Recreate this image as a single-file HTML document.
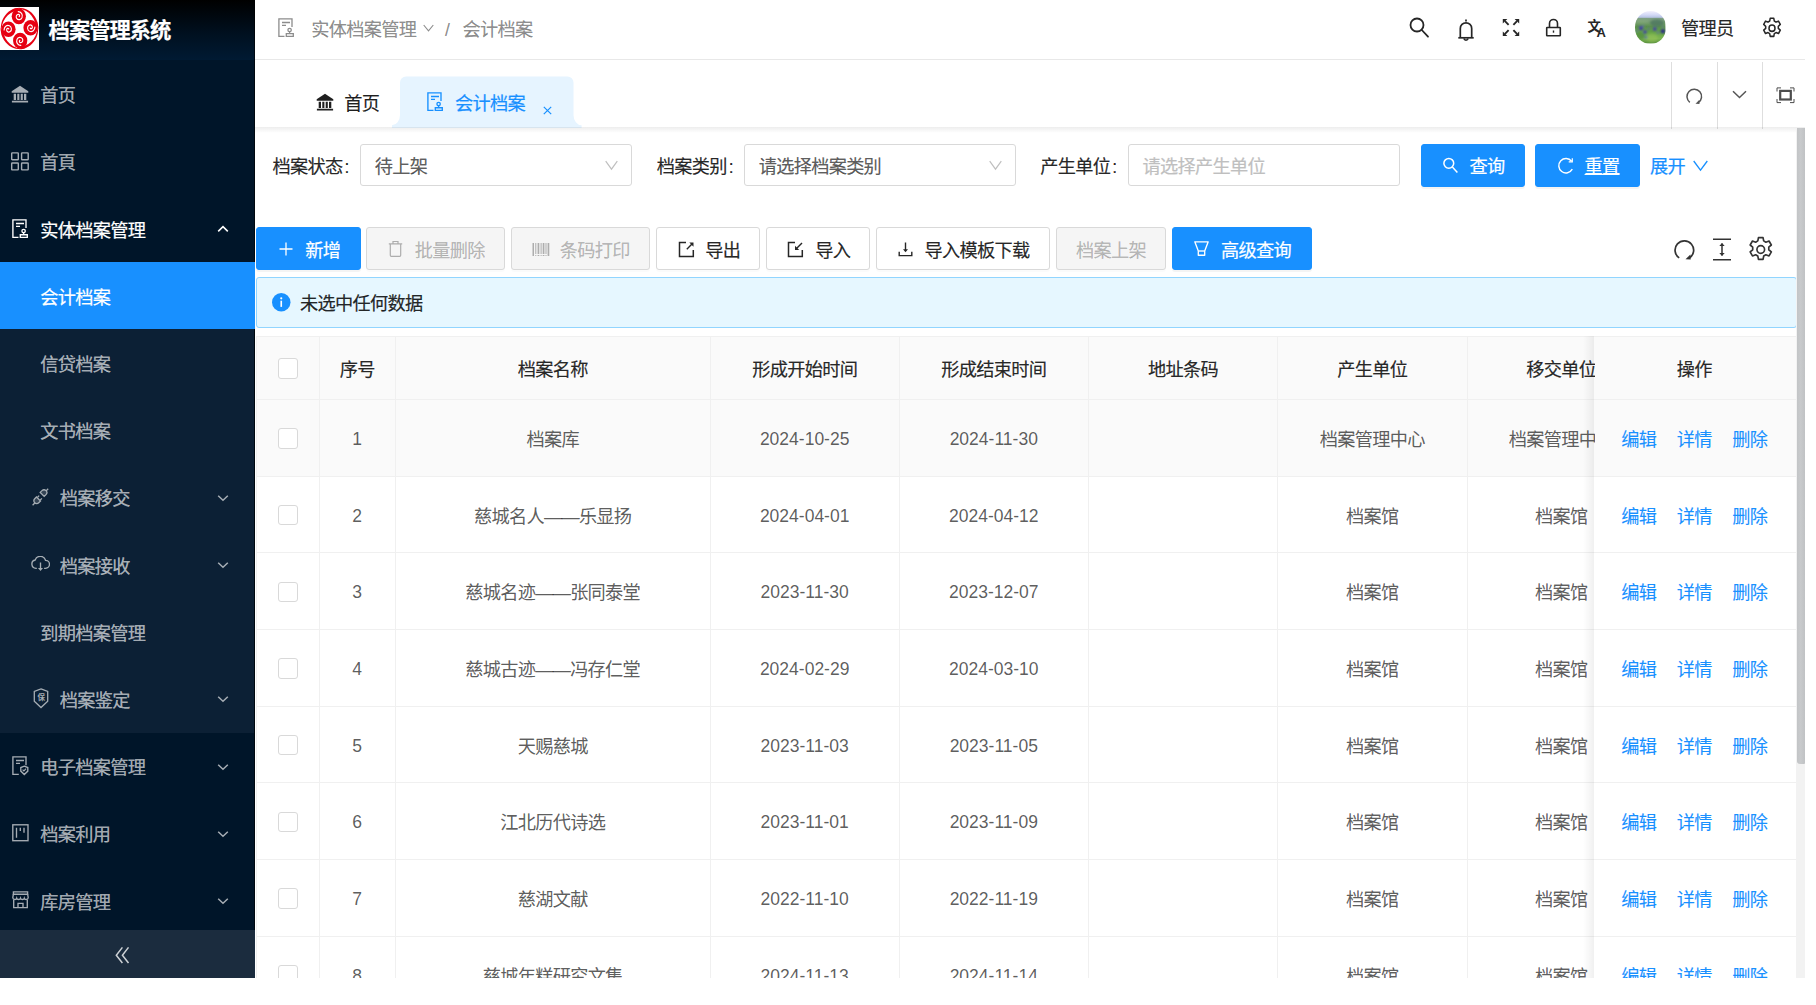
<!DOCTYPE html>
<html lang="zh-CN">
<head>
<meta charset="utf-8">
<title>档案管理系统</title>
<style>
*{box-sizing:border-box;margin:0;padding:0}
html,body{width:1816px;height:1005px;background:#fff;overflow:hidden}
body{font-family:"Liberation Sans","Noto Sans CJK SC",sans-serif;font-size:18.2px;letter-spacing:-0.7px;color:rgba(0,0,0,.85);-webkit-text-stroke:0.22px currentColor}
#app{position:relative;width:1805px;height:978px;overflow:hidden;background:#fff}
svg{display:block}
.abs{position:absolute}
/* sidebar */
#side{position:absolute;left:0;top:0;width:255px;height:978px;background:#001529;z-index:5;overflow:hidden}
#logo{position:absolute;left:0;top:0;width:255px;height:60px;background:linear-gradient(180deg,#000 0%,#00101f 55%,#001a33 100%)}
#logo .img{position:absolute;left:0;top:7px;width:39px;height:43px;background:#fff}
#logo .tt{position:absolute;left:48.6px;top:1.2px;line-height:60px;font-size:21.3px;letter-spacing:-1px;font-weight:700;color:#fff;white-space:nowrap}
.mi{position:absolute;left:0;width:255px;height:67.2px;line-height:67.2px;color:rgba(255,255,255,.65);white-space:nowrap}
.mi .ic{position:absolute;left:11px;top:24.6px;width:18px;height:18px}
.mi .tx{position:absolute;left:40.2px;top:2.6px}
.mi .ar{position:absolute;left:217px;top:28px;width:12px;height:12px}
.mi.sub .ic{left:31px}
.mi.sub .tx{left:59.7px}
.mi.w{color:#fff}
#subbg{position:absolute;left:0;top:262px;width:254px;height:470.5px;background:#0c2035}
#sel{position:absolute;left:0;top:262px;width:255px;height:67.3px;background:#1890ff}
#trig{position:absolute;left:0;top:930px;width:255px;height:48px;background:#1b2c3e}
/* header */
#hdr{position:absolute;left:255px;top:0;width:1550px;height:60px;background:#fff;border-bottom:1px solid #e8e8e8}
.bc{position:absolute;top:1px;line-height:58px;color:rgba(0,0,0,.45);white-space:nowrap}
/* tabs */
#tabs{position:absolute;left:255px;top:60px;width:1550px;height:67.5px;background:#fff}
#tabshadow{position:absolute;left:255px;top:127px;width:1550px;height:6px;background:linear-gradient(180deg,rgba(0,0,0,.07),rgba(0,0,0,0))}
.tb{position:absolute;white-space:nowrap;line-height:25px}
/* form */
.lbl{position:absolute;top:144.3px;height:42px;line-height:46px;white-space:nowrap;color:rgba(0,0,0,.85)}
.inp{position:absolute;top:144.2px;height:42.3px;border:1px solid #d9d9d9;border-radius:3px;background:#fff;line-height:44px;padding-left:14px;white-space:nowrap;color:rgba(0,0,0,.65)}
.btn{position:absolute;height:42.4px;line-height:40px;border:1px solid #d9d9d9;border-radius:3px;background:#fff;white-space:nowrap;color:rgba(0,0,0,.85);box-shadow:0 2px 0 rgba(0,0,0,.015)}
.btn.p{background:#1890ff;border-color:#1890ff;color:#fff;box-shadow:0 2px 0 rgba(0,0,0,.045)}
.btn.d{background:#f5f5f5;color:rgba(0,0,0,.27)}
.btn .t{position:absolute;top:2.4px}
.btn .i{position:absolute}
/* alert */
#alert{position:absolute;left:256px;top:277px;width:1540.5px;height:50.5px;background:#e6f7ff;border:1px solid #91d5ff;border-radius:3px}
/* table */
#tbl{position:absolute;left:256px;top:335.5px;width:1539.500px;height:642.500px;overflow:hidden;border-top:1px solid #f0f0f0;border-left:1px solid #f0f0f0}
.row{position:absolute;left:0;width:1541px;border-bottom:1px solid #f0f0f0}
.row.h{top:0;height:63.4px;background:#fafafa;font-weight:400;color:rgba(0,0,0,.85)}
.row.b{height:76.67px;color:rgba(0,0,0,.65);-webkit-text-stroke:0.08px currentColor}
.c{position:absolute;top:0;height:100%;border-right:1px solid #f0f0f0;text-align:center;white-space:nowrap;overflow:hidden;text-indent:-0.7px}
.row.h .c{line-height:67.5px}
.row.b .c{line-height:80.4px}
.row.b .c.n{line-height:79.2px}
.c0{left:0;width:63px}.c1{left:63px;width:76px}.c2{left:139px;width:315px}.c3{left:454px;width:189px}.c4{left:643px;width:189.2px}.c5{left:832.2px;width:189.3px}.c6{left:1021.5px;width:189px}.c7{left:1210.5px;width:189px}
.c8{left:1337.5px;width:203px;background:#fff;border-right:0}
.row.h .c8{padding-right:2.6px}
.row.h .c8,.row.hv .c8,.row.hv{background:#fafafa}
.n{font-size:17.5px;letter-spacing:0;-webkit-text-stroke:0}
.cb{position:absolute;left:21.1px;width:20px;height:20.5px;border:1px solid #d9d9d9;border-radius:3px;background:#fff}
.row.h .cb{top:21.5px}
.row.b .cb{top:28.3px}
.c8 a{position:absolute;top:0;color:#1890ff}
#fixshadow{position:absolute;left:1583px;top:336px;width:11px;height:642px;background:linear-gradient(90deg,rgba(0,0,0,0),rgba(0,0,0,.06))}
/* scrollbar */
#sbt{position:absolute;left:1796px;top:128px;width:9px;height:850px;background:#f2f2f2}
#sbh{position:absolute;left:1797px;top:128px;width:8px;height:636px;background:linear-gradient(90deg,#c2c4c6,#c8cacc 45%,#c0c2c4);border-radius:0 0 1px 3px}
</style>
</head>
<body>
<div id="app">
<div id="side">
 <div id="logo">
  <div class="img"><svg width="39" height="43" viewBox="0 0 40 40" preserveAspectRatio="none"><g fill="#e60012"><g id="sw"><path d="M20.500 0.700A19.300 19.300 0 0 0 2.600 28.100A18.900 18.900 0 0 1 14.500 4z"/><circle cx="19.300" cy="8.700" r="7.300"/><path d="M19.600 9c1-0.600 0.500-2.200-0.800-2.200-1.900 0-2.800 2.200-1.700 3.700 1.400 1.900 4.500 1.500 5.500-0.800 1.100-2.700-1-5.500-3.900-5.500" fill="none" stroke="#fff" stroke-width="1.150" stroke-linecap="round"/></g><use href="#sw" transform="rotate(90 20 20)"/><use href="#sw" transform="rotate(180 20 20)"/><use href="#sw" transform="rotate(270 20 20)"/></g></svg></div>
  <div class="tt">档案管理系统</div>
 </div>
 <div class="abs" style="left:254px;top:0;width:1px;height:978px;background:rgba(0,0,0,.62)"></div>
 <div id="subbg"></div>
 <div id="sel"></div>
 <div class="mi" style="top:60.6px"><span class="ic"><svg width="18" height="18" viewBox="0 0 18 18" fill="#a6adb4"><path d="M9 0.700 17.300 6.300v1.500H0.700V6.300z"/><path d="M2.700 8.800h2.300v6.200H2.700zM6.300 8.800h2.100v6.200H6.300zM9.700 8.800h2.100v6.200H9.700zM13 8.800h2.300v6.200H13zM0.900 15.700h16.200v1.900H0.900z"/></svg></span><span class="tx">首页</span></div>
 <div class="mi" style="top:127.8px"><span class="ic"><svg width="18" height="19" viewBox="0 0 18 19" fill="none" stroke="#a6adb4" stroke-width="1.400"><rect x="0.700" y="0.900" width="6.600" height="6.900" rx="0.600"/><rect x="10.600" y="0.900" width="6.600" height="6.900" rx="0.600"/><rect x="0.700" y="11" width="6.600" height="6.900" rx="0.600"/><rect x="10.600" y="11" width="6.600" height="6.900" rx="0.600"/></svg></span><span class="tx">首頁</span></div>
 <div class="mi w" style="top:195px"><span class="ic" style="left:12px;top:23.500px"><svg width="17" height="20" viewBox="0 0 17 20" fill="none" stroke="#fff" stroke-width="1.350"><path d="M6.500 18.300H0.900V0.900H14v8"/><path d="M4 4.500h8M4 7.300h4"/><circle cx="11.600" cy="12" r="1.700"/><path d="M11.600 13.700v1.900M8.300 15.700h7v2.600h-7z"/></svg></span><span class="tx">实体档案管理</span><span class="ar"><svg width="12" height="12" viewBox="0 0 12 12" fill="none" stroke="#fff" stroke-width="1.600"><path d="M1.200 8.300 6 3.700l4.800 4.600"/></svg></span></div>
 <div class="mi w" style="top:262.200px"><span class="tx">会计档案</span></div>
 <div class="mi" style="top:329.400px"><span class="tx">信贷档案</span></div>
 <div class="mi" style="top:396.600px"><span class="tx">文书档案</span></div>
 <div class="mi sub" style="top:463.800px"><span class="ic" style="left:32px;top:24px"><svg width="17" height="18" viewBox="0 0 17 18" fill="none" stroke="#a6adb4" stroke-width="1.300"><path d="M0.600 17.200 3 14.800M16.200 0.800 14 3"/><path d="M8.200 4.400 10 2.600a2.800 2.800 0 0 1 4 4L12.200 8.400z" fill="rgba(166,173,180,.25)"/><path d="M2.700 14.800a2.800 2.800 0 0 1 0-4L4.500 9 8.500 13l-1.800 1.800a2.800 2.800 0 0 1-4 0z" fill="rgba(166,173,180,.25)"/><path d="M5.600 9.200 7.200 7.600M8.300 12 9.900 10.400"/></svg></span><span class="tx">档案移交</span><span class="ar"><svg width="12" height="12" viewBox="0 0 12 12" fill="none" stroke="#a6adb4" stroke-width="1.500"><path d="M1.200 3.700 6 8.300l4.800-4.600"/></svg></span></div>
 <div class="mi sub" style="top:531px"><span class="ic" style="left:31px;top:25px"><svg width="19" height="16" viewBox="0 0 19 16" fill="none" stroke="#a6adb4" stroke-width="1.350"><path d="M5.800 12.300H5a4.200 4.200 0 0 1-0.800-8.300 5.400 5.400 0 0 1 10.300 0.300 4 4 0 0 1 0 8h-1.400"/><path d="M9.500 6.500v6"/><path d="M7 12h5l-2.500 3z" fill="#a6adb4" stroke="none"/></svg></span><span class="tx">档案接收</span><span class="ar"><svg width="12" height="12" viewBox="0 0 12 12" fill="none" stroke="#a6adb4" stroke-width="1.500"><path d="M1.200 3.700 6 8.300l4.800-4.600"/></svg></span></div>
 <div class="mi" style="top:598.200px"><span class="tx">到期档案管理</span></div>
 <div class="mi sub" style="top:665.400px"><span class="ic" style="left:32.500px;top:23px"><svg width="16" height="21" viewBox="0 0 16 21" fill="none" stroke="#a6adb4" stroke-width="1.300"><path d="M8 0.900 14.700 3.400v9.800L8 19.500 1.300 13.200V3.400z"/><text x="8" y="12.300" font-size="7.500" text-anchor="middle" fill="#a6adb4" stroke="none" font-family="Noto Sans CJK SC, sans-serif" font-weight="700">保</text></svg></span><span class="tx">档案鉴定</span><span class="ar"><svg width="12" height="12" viewBox="0 0 12 12" fill="none" stroke="#a6adb4" stroke-width="1.500"><path d="M1.200 3.700 6 8.300l4.800-4.600"/></svg></span></div>
 <div class="mi" style="top:732.600px"><span class="ic" style="left:12px;top:23.500px"><svg width="17" height="20" viewBox="0 0 17 20" fill="none" stroke="#a6adb4" stroke-width="1.350"><path d="M6.800 18.300H0.900V0.900H14v8.300"/><path d="M4 4.500h8M4 7.300h4"/><path d="M12.300 10.200 15.800 11.500v3.600l-3.500 3.400-3.500-3.400v-3.600z"/><path d="M10.600 13.700l1.300 1.300 2.200-2.300" stroke-width="1.100"/></svg></span><span class="tx">电子档案管理</span><span class="ar"><svg width="12" height="12" viewBox="0 0 12 12" fill="none" stroke="#a6adb4" stroke-width="1.500"><path d="M1.200 3.700 6 8.300l4.800-4.600"/></svg></span></div>
 <div class="mi" style="top:799.800px"><span class="ic" style="left:12px;top:24.300px"><svg width="17" height="18" viewBox="0 0 17 18" fill="none" stroke="#a6adb4" stroke-width="1.350"><rect x="0.800" y="0.800" width="15.200" height="15.900"/><path d="M4.500 3.800v10M8.300 3.800v3.200M12 3.800v5"/></svg></span><span class="tx">档案利用</span><span class="ar"><svg width="12" height="12" viewBox="0 0 12 12" fill="none" stroke="#a6adb4" stroke-width="1.500"><path d="M1.200 3.700 6 8.300l4.800-4.600"/></svg></span></div>
 <div class="mi" style="top:867px"><span class="ic" style="left:12px;top:24.300px"><svg width="17" height="18" viewBox="0 0 17 18" fill="none" stroke="#a6adb4" stroke-width="1.350"><path d="M1.400 0.900h14.200v2.300H1.400z"/><path d="M1.400 3.200 0.800 6.500a2 2 0 0 0 3.900 0.600 2 2 0 0 0 3.800 0 2 2 0 0 0 3.800 0A2 2 0 0 0 16.200 6.500L15.600 3.200"/><path d="M1.700 8.500v8.100h13.600V8.500"/><path d="M6 16.600v-4.200h5v4.200"/></svg></span><span class="tx">库房管理</span><span class="ar"><svg width="12" height="12" viewBox="0 0 12 12" fill="none" stroke="#a6adb4" stroke-width="1.500"><path d="M1.200 3.700 6 8.300l4.800-4.600"/></svg></span></div>
 <div id="trig"><svg class="abs" style="left:115px;top:16px" width="15" height="18" viewBox="0 0 15 18" fill="none" stroke="#cdd1d5" stroke-width="1.500"><path d="M7.400 1.400 1.300 9.200l6.100 7.800M13.500 1.400 7.400 9.200l6.100 7.800"/></svg></div>
</div>

<div id="hdr">
 <svg class="abs" style="left:23px;top:17.500px" width="17" height="20" viewBox="0 0 17 20" fill="none" stroke="#8c8c8c" stroke-width="1.300"><path d="M6.500 18.300H0.900V0.900H14v8"/><path d="M4 4.500h8M4 7.300h4"/><circle cx="11.600" cy="12" r="1.700"/><path d="M11.600 13.700v1.900M8.300 15.700h7v2.600h-7z"/></svg>
 <span class="bc" style="left:56.200px">实体档案管理</span>
 <svg class="abs" style="left:168px;top:24px" width="11" height="8" viewBox="0 0 11 8" fill="none" stroke="#8c8c8c" stroke-width="1.100"><path d="M0.700 1 5.500 6.800 10.300 1"/></svg>
 <span class="bc" style="left:190px;font-size:17.500px">/</span>
 <span class="bc" style="left:207.500px">会计档案</span>
 <svg class="abs" style="left:1153px;top:16px" width="22" height="23" viewBox="0 0 22 23" fill="none" stroke="#262626" stroke-width="1.800" stroke-linecap="round"><circle cx="9" cy="9" r="6.500"/><path d="M13.800 14 20 20.700"/></svg>
 <svg class="abs" style="left:1201px;top:18px" width="20" height="25" viewBox="0 0 20 25" fill="none" stroke="#262626" stroke-width="1.700" stroke-linejoin="round"><path d="M10 1.500v2"/><path d="M2.300 19.800h15.400"/><path d="M4.300 19.500v-9a5.700 5.700 0 0 1 11.400 0v9"/><path d="M7.800 20.500a2.300 2.300 0 0 0 4.400 0" stroke-width="1.500"/></svg>
 <svg class="abs" style="left:1246px;top:17px" width="20" height="21" viewBox="0 0 20 21" fill="#262626" stroke="#262626" stroke-width="1.900"><path d="M4 4.200 7.600 7.800M16 4.200l-3.600 3.600M4 16.800l3.600-3.600M16 16.800l-3.600-3.600" fill="none"/><path d="M1.800 2v4.600L6.400 2zM18.200 2v4.600L13.600 2zM1.800 19v-4.600L6.400 19zM18.200 19v-4.600L13.600 19z" stroke="none"/></svg>
 <svg class="abs" style="left:1290px;top:18px" width="17" height="20" viewBox="0 0 17 20" fill="none" stroke="#262626" stroke-width="1.600"><rect x="1.700" y="9.500" width="13.600" height="8.200" rx="0.500"/><path d="M4.500 9.500V5.500a4 4 0 0 1 8 0v4"/><path d="M8.500 12.500v2.200" stroke-width="1.400"/></svg>
 <svg class="abs" style="left:1332px;top:18px" width="21" height="20" viewBox="0 0 21 20"><text x="0.500" y="13" font-size="13.500" font-weight="700" fill="#262626" font-family="Noto Sans CJK SC, sans-serif">文</text><text x="9.600" y="18.800" font-size="13" font-weight="700" fill="#262626" font-family="Liberation Sans, sans-serif">A</text></svg>
 <div class="abs" style="left:1380.200px;top:11.400px;width:30.400px;height:32.400px;border-radius:50%;overflow:hidden">
  <svg width="30.400" height="32.400" viewBox="0 0 30.400 32.400"><defs><linearGradient id="avg" x1="0" y1="0" x2="0" y2="1"><stop offset="0" stop-color="#f3f0fd"/><stop offset="0.120" stop-color="#d3d9f6"/><stop offset="0.195" stop-color="#b9c4e4"/><stop offset="0.230" stop-color="#7f9f86"/><stop offset="0.400" stop-color="#6d9a62"/><stop offset="0.480" stop-color="#5b8f4c"/><stop offset="0.620" stop-color="#62a044"/><stop offset="0.850" stop-color="#7cb551"/><stop offset="1" stop-color="#5a913f"/></linearGradient><filter id="avb" x="-20%" y="-20%" width="140%" height="140%"><feGaussianBlur stdDeviation="0.800"/></filter></defs>
  <rect width="30.400" height="32.400" fill="url(#avg)"/>
  <g filter="url(#avb)"><ellipse cx="22" cy="12" rx="7" ry="3.500" fill="#4c7560" opacity=".8"/><ellipse cx="7" cy="10" rx="7" ry="1.600" fill="#86aa7c" opacity=".8"/><ellipse cx="17" cy="27" rx="6" ry="4" fill="#9cc65a" opacity=".5"/><ellipse cx="5" cy="25" rx="5" ry="4" fill="#4f8a3a" opacity=".7"/>
  <g fill="#5052b0"><circle cx="6" cy="17.100" r="2.300"/><circle cx="10" cy="20.900" r="1.900"/><circle cx="19.800" cy="17.900" r="2"/><circle cx="27.900" cy="20.300" r="2.300" fill="#2c2f86"/><circle cx="1.700" cy="19.900" r="1" fill="#5a68b0"/><circle cx="13.700" cy="17.700" r="1" fill="#5a68b0"/><circle cx="22.900" cy="21.700" r="1.100" fill="#5a68b0"/><circle cx="11.100" cy="26.300" r="1.300" fill="#5a68b0"/><circle cx="28" cy="16.100" r="0.900" fill="#6a78b8"/><circle cx="8.400" cy="14.900" r="0.900" fill="#6a78b8"/></g><g fill="#2e3190"><circle cx="6" cy="17.500" r="1.200"/><circle cx="10" cy="21.300" r="1"/><circle cx="19.800" cy="18.300" r="1"/></g></g></svg>
 </div>
 <span class="abs" style="left:1426px;top:0;line-height:58px;white-space:nowrap;color:rgba(0,0,0,.85)">管理员</span>
 <svg class="abs" style="left:1507px;top:16.600px" width="20" height="22.400" viewBox="0 0 20 21" preserveAspectRatio="none" fill="none" stroke="#262626" stroke-width="1.500" stroke-linejoin="round"><circle cx="10" cy="10.500" r="3"/><path d="M8.200 1.200h3.600l0.500 2.600 1.700 1 2.500-0.900 1.800 3.100-2 1.700v2l2 1.700-1.800 3.100-2.500-0.900-1.700 1-0.500 2.600H8.200l-0.500-2.600-1.700-1-2.500 0.900-1.800-3.100 2-1.700v-2l-2-1.700 1.800-3.100 2.500 0.900 1.700-1z"/></svg>
</div>

<div id="tabs">
 <svg class="abs" style="left:137px;top:16px" width="190" height="53" viewBox="0 0 190 53"><path transform="translate(-0.100 0.500)" d="M0 51.400V48.800A8.100 10.300 0 0 0 8.100 38.500V6a6 6 0 0 1 6-6H175.600a6 6 0 0 1 6 6V38.500A8.100 10.300 0 0 0 189.700 48.800V51.400z" fill="#e6f4ff"/></svg>
 <svg class="abs" style="left:60.500px;top:32.500px" width="18" height="18" viewBox="0 0 18 18" fill="#1f1f1f"><path d="M9 0.700 17.300 6.300v1.500H0.700V6.300z"/><path d="M2.700 8.800h2.300v6.200H2.700zM6.300 8.800h2.100v6.200H6.300zM9.700 8.800h2.100v6.200H9.700zM13 8.800h2.300v6.200H13zM0.900 15.700h16.200v1.900H0.900z"/></svg>
 <span class="tb" style="left:89.300px;top:32px;color:rgba(0,0,0,.88)">首页</span>
 <svg class="abs" style="left:172px;top:31.500px" width="17" height="20" viewBox="0 0 17 20" fill="none" stroke="#1890ff" stroke-width="1.350"><path d="M6.500 18.300H0.900V0.900H14v8"/><path d="M4 4.500h8M4 7.300h4"/><circle cx="11.600" cy="12" r="1.700"/><path d="M11.600 13.700v1.900M8.300 15.700h7v2.600h-7z"/></svg>
 <span class="tb" style="left:200px;top:32px;color:#1890ff">会计档案</span>
 <svg class="abs" style="left:288px;top:45.500px" width="9" height="9" viewBox="0 0 9 9" fill="none" stroke="#1890ff" stroke-width="1.200"><path d="M0.800 0.800 8.200 8.200M8.200 0.800 0.800 8.200"/></svg>
 <div class="abs" style="left:1416px;top:2px;width:1px;height:66.500px;background:#dedede"></div>
 <div class="abs" style="left:1462px;top:2px;width:1px;height:66.500px;background:#dedede"></div>
 <div class="abs" style="left:1507px;top:2px;width:1px;height:66.500px;background:#dedede"></div>
 <svg class="abs" style="left:1430px;top:27px" width="19" height="19" viewBox="0 0 19 19" fill="none" stroke="#555" stroke-width="1.500"><path d="M4.800 15.300A7.300 7.300 0 1 1 13.300 15.600"/><path d="M10.500 16.800 14.500 16.900 14.200 13z" fill="#555" stroke="none"/></svg>
 <svg class="abs" style="left:1477px;top:30px" width="15" height="9" viewBox="0 0 15 9" fill="none" stroke="#555" stroke-width="1.500"><path d="M1 1.200 7.500 7.500 14 1.200"/></svg>
 <svg class="abs" style="left:1520.500px;top:26.500px" width="19" height="17" viewBox="0 0 19 17" fill="none" stroke="#4d4d4d"><rect x="4.200" y="3.900" width="10.600" height="8.600" stroke-width="2.200"/><path d="M1 4.500V0.900h4M14 0.900h4v3.600M1 12v3.600h4M14 15.600h4V12" stroke-width="1"/></svg>
</div>
<div id="tabshadow"></div>

<span class="lbl" style="left:272.500px">档案状态<span style="font-size:17.500px;letter-spacing:0;margin-left:2px">:</span></span>
<div class="inp" style="left:359.700px;width:272.500px">待上架<svg class="abs" style="left:244px;top:14.500px" width="13" height="11" viewBox="0 0 13 11" fill="none" stroke="#bfbfbf" stroke-width="1.200"><path d="M0.700 1.200 6.500 9.200 12.300 1.200"/></svg></div>
<span class="lbl" style="left:656.800px">档案类别<span style="font-size:17.500px;letter-spacing:0;margin-left:2px">:</span></span>
<div class="inp" style="left:743.700px;width:272.500px">请选择档案类别<svg class="abs" style="left:244.500px;top:14.500px" width="13" height="11" viewBox="0 0 13 11" fill="none" stroke="#bfbfbf" stroke-width="1.200"><path d="M0.700 1.200 6.500 9.200 12.300 1.200"/></svg></div>
<span class="lbl" style="left:1040.300px">产生单位<span style="font-size:17.500px;letter-spacing:0;margin-left:2px">:</span></span>
<div class="inp" style="left:1127.500px;width:272.500px;color:#bfbfbf">请选择产生单位</div>
<div class="btn p" style="left:1420.600px;top:144px;width:104.600px;height:42.500px"><svg class="i" style="left:20.300px;top:11.600px" width="17" height="17" viewBox="0 0 17 18" fill="none" stroke="#fff" stroke-width="1.600"><circle cx="6.700" cy="6.700" r="5.200"/><path d="M10.500 10.700 15.800 16.300"/></svg><span class="t" style="left:48px">查询</span></div>
<div class="btn p" style="left:1535.400px;top:144px;width:104.600px;height:42.500px"><svg class="i" style="left:20.500px;top:11.500px" width="18" height="18" viewBox="0 0 18 18" fill="none" stroke="#fff" stroke-width="1.400"><path d="M15.300 12.200A7.200 7.200 0 1 1 14.600 4.200"/><path d="M15.300 1.300v3.600h-3.600" stroke-width="1.200"/></svg><span class="t" style="left:48.200px;text-decoration:underline;text-underline-offset:0.5px;text-decoration-thickness:1px">重置</span></div>
<span class="abs" style="left:1650px;top:144.500px;line-height:45px;color:#1890ff;white-space:nowrap">展开</span>
<svg class="abs" style="left:1693px;top:159.500px" width="15" height="12" viewBox="0 0 15 12" fill="none" stroke="#1890ff" stroke-width="1.300"><path d="M0.700 1 7.500 10.200 14.300 1"/></svg>

<div class="btn p" style="left:256.300px;top:227.300px;width:104.500px"><svg class="i" style="left:22px;top:13.6px" width="14" height="14" viewBox="0 0 14 14" fill="none" stroke="#fff" stroke-width="1.300"><path d="M7 0.500v13M0.500 7h13"/></svg><span class="t" style="left:48px">新增</span></div>
<div class="btn d" style="left:366px;top:227.300px;width:139.300px"><svg class="i" style="left:21px;top:12.200px" width="15" height="18" viewBox="0 0 15 18" fill="none" stroke="#adadad" stroke-width="1.200"><path d="M0.800 3.800h13.400M5 3.600V1.500h5v2.100M2.300 4v11.300a1 1 0 0 0 1 1h8.400a1 1 0 0 0 1-1V4"/></svg><span class="t" style="left:47.700px">批量删除</span></div>
<div class="btn d" style="left:511px;top:227.300px;width:139.300px"><svg class="i" style="left:19.500px;top:15px" width="18" height="13" viewBox="0 0 18 13" fill="#adadad"><path d="M0.500 0h1.500v13H0.500zM3.300 0h1v11h-1zM5.600 0h1.700v11H5.600zM8.600 0h1v11h-1zM10.700 0h1.700v11h-1.700zM13.500 0h1v11h-1zM15.600 0h1.700v13h-1.700zM3.300 12h1v1h-1zM5.600 12h1.700v1H5.600zM8.600 12h1v1h-1zM10.700 12h1.700v1h-1.700zM13.500 12h1v1h-1z"/></svg><span class="t" style="left:47.700px">条码打印</span></div>
<div class="btn" style="left:656.200px;top:227.300px;width:103.800px"><svg class="i" style="left:20.500px;top:12.700px" width="17" height="17" viewBox="0 0 17 17" fill="none" stroke="#262626" stroke-width="1.500"><path d="M8 1.500H1.500v14h13.800V9"/><path d="M8.800 8.200 14 3" stroke-width="1.400"/><path d="M11.300 1.500h4.200v4.200z" fill="#262626" stroke="none"/></svg><span class="t" style="left:48px">导出</span></div>
<div class="btn" style="left:765.700px;top:227.300px;width:104.300px"><svg class="i" style="left:20.800px;top:12.700px" width="17" height="17" viewBox="0 0 17 17" fill="none" stroke="#262626" stroke-width="1.500"><path d="M8 1.500H1.500v14h13.800V9"/><path d="M9.500 7.500 15 2" stroke-width="1.400"/><path d="M8 4.800v4.200h4.200z" fill="#262626" stroke="none"/></svg><span class="t" style="left:48.500px">导入</span></div>
<div class="btn" style="left:875.500px;top:227.300px;width:174.500px"><svg class="i" style="left:21.600px;top:13.800px" width="15" height="15" viewBox="0 0 15 15" fill="none" stroke="#262626" stroke-width="1.400"><path d="M7.500 0.500v8"/><path d="M5 7.300h5L7.500 10.300z" fill="#262626" stroke="none"/><path d="M1.200 9.800v3.800h12.600V9.800"/></svg><span class="t" style="left:48px">导入模板下载</span></div>
<div class="btn d" style="left:1055.500px;top:227.300px;width:110.500px"><span class="t" style="left:19.500px">档案上架</span></div>
<div class="btn p" style="left:1171.500px;top:227.300px;width:140px"><svg class="i" style="left:21.200px;top:12.600px" width="15" height="15" viewBox="0 0 15 15" fill="none" stroke="#fff" stroke-width="1.350" stroke-linejoin="round"><path d="M0.800 0.800h13.400L10.700 10v4.200H4.300V10z"/><path d="M4.300 10h6.400"/></svg><span class="t" style="left:48.500px">高级查询</span></div>
<svg class="abs" style="left:1673px;top:237.600px" width="23" height="23.500" viewBox="0 0 23 23" fill="none" stroke="#333" stroke-width="1.700"><path d="M6.200 19.600A9.300 9.300 0 1 1 16.200 19.800"/><path d="M12.500 21 17.700 21.300 17.400 16.300z" fill="#333" stroke="none"/></svg>
<svg class="abs" style="left:1712px;top:237.500px" width="20" height="23" viewBox="0 0 20 23" fill="none" stroke="#333" stroke-width="1.500"><path d="M1 1.300h18M1 21.700h18M10 5.500v12"/><path d="M7.300 8 10 5 12.700 8zM7.300 15 10 18 12.700 15z" fill="#333" stroke="none"/></svg>
<svg class="abs" style="left:1747.500px;top:235.600px" width="25.500" height="27" viewBox="0 0 20 21" preserveAspectRatio="none" fill="none" stroke="#333" stroke-width="1.300" stroke-linejoin="round"><circle cx="10" cy="10.500" r="3"/><path d="M8.200 1.200h3.600l0.500 2.600 1.700 1 2.500-0.900 1.800 3.100-2 1.700v2l2 1.700-1.800 3.100-2.500-0.900-1.700 1-0.500 2.600H8.200l-0.500-2.600-1.700-1-2.500 0.900-1.800-3.100 2-1.700v-2l-2-1.700 1.800-3.100 2.500 0.900 1.700-1z"/></svg>

<div id="alert"><svg class="abs" style="left:15px;top:15px" width="18.500" height="18.500" viewBox="0 0 18 18"><circle cx="9" cy="9" r="9" fill="#1890ff"/><rect x="8.200" y="7.500" width="1.600" height="6" fill="#fff"/><circle cx="9" cy="5.200" r="1.050" fill="#fff"/></svg><span class="abs" style="left:43px;top:2.300px;line-height:49.500px;white-space:nowrap;color:rgba(0,0,0,.85)">未选中任何数据</span></div>

<div id="tbl">
 <div class="row h"><div class="c c0"><span class="cb"></span></div><div class="c c1">序号</div><div class="c c2">档案名称</div><div class="c c3">形成开始时间</div><div class="c c4">形成结束时间</div><div class="c c5">地址条码</div><div class="c c6">产生单位</div><div class="c c7">移交单位</div><div class="c c8">操作</div></div>
 <div class="row b hv" style="top:63.40px"><div class="c c0"><span class="cb"></span></div><div class="c c1 n">1</div><div class="c c2">档案库</div><div class="c c3 n">2024-10-25</div><div class="c c4 n">2024-11-30</div><div class="c c5"></div><div class="c c6">档案管理中心</div><div class="c c7">档案管理中心</div><div class="c c8"><a style="left:27.500px">编辑</a><a style="left:83px">详情</a><a style="left:138.500px">删除</a></div></div>
 <div class="row b" style="top:140.07px"><div class="c c0"><span class="cb"></span></div><div class="c c1 n">2</div><div class="c c2">慈城名人——乐显扬</div><div class="c c3 n">2024-04-01</div><div class="c c4 n">2024-04-12</div><div class="c c5"></div><div class="c c6">档案馆</div><div class="c c7">档案馆</div><div class="c c8"><a style="left:27.500px">编辑</a><a style="left:83px">详情</a><a style="left:138.500px">删除</a></div></div>
 <div class="row b" style="top:216.74px"><div class="c c0"><span class="cb"></span></div><div class="c c1 n">3</div><div class="c c2">慈城名迹——张同泰堂</div><div class="c c3 n">2023-11-30</div><div class="c c4 n">2023-12-07</div><div class="c c5"></div><div class="c c6">档案馆</div><div class="c c7">档案馆</div><div class="c c8"><a style="left:27.500px">编辑</a><a style="left:83px">详情</a><a style="left:138.500px">删除</a></div></div>
 <div class="row b" style="top:293.41px"><div class="c c0"><span class="cb"></span></div><div class="c c1 n">4</div><div class="c c2">慈城古迹——冯存仁堂</div><div class="c c3 n">2024-02-29</div><div class="c c4 n">2024-03-10</div><div class="c c5"></div><div class="c c6">档案馆</div><div class="c c7">档案馆</div><div class="c c8"><a style="left:27.500px">编辑</a><a style="left:83px">详情</a><a style="left:138.500px">删除</a></div></div>
 <div class="row b" style="top:370.08px"><div class="c c0"><span class="cb"></span></div><div class="c c1 n">5</div><div class="c c2">天赐慈城</div><div class="c c3 n">2023-11-03</div><div class="c c4 n">2023-11-05</div><div class="c c5"></div><div class="c c6">档案馆</div><div class="c c7">档案馆</div><div class="c c8"><a style="left:27.500px">编辑</a><a style="left:83px">详情</a><a style="left:138.500px">删除</a></div></div>
 <div class="row b" style="top:446.75px"><div class="c c0"><span class="cb"></span></div><div class="c c1 n">6</div><div class="c c2">江北历代诗选</div><div class="c c3 n">2023-11-01</div><div class="c c4 n">2023-11-09</div><div class="c c5"></div><div class="c c6">档案馆</div><div class="c c7">档案馆</div><div class="c c8"><a style="left:27.500px">编辑</a><a style="left:83px">详情</a><a style="left:138.500px">删除</a></div></div>
 <div class="row b" style="top:523.42px"><div class="c c0"><span class="cb"></span></div><div class="c c1 n">7</div><div class="c c2">慈湖文献</div><div class="c c3 n">2022-11-10</div><div class="c c4 n">2022-11-19</div><div class="c c5"></div><div class="c c6">档案馆</div><div class="c c7">档案馆</div><div class="c c8"><a style="left:27.500px">编辑</a><a style="left:83px">详情</a><a style="left:138.500px">删除</a></div></div>
 <div class="row b" style="top:600.09px"><div class="c c0"><span class="cb"></span></div><div class="c c1 n">8</div><div class="c c2">慈城年糕研究文集</div><div class="c c3 n">2024-11-13</div><div class="c c4 n">2024-11-14</div><div class="c c5"></div><div class="c c6">档案馆</div><div class="c c7">档案馆</div><div class="c c8"><a style="left:27.500px">编辑</a><a style="left:83px">详情</a><a style="left:138.500px">删除</a></div></div>
</div>
<div id="fixshadow"></div>

<div id="sbt"></div><div id="sbh"></div>
</div>
</body>
</html>
